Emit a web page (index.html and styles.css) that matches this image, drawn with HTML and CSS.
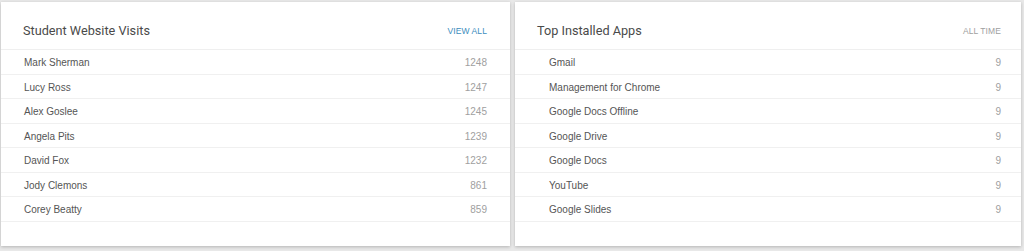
FILE: index.html
```html
<!DOCTYPE html>
<html>
<head>
<meta charset="utf-8">
<link rel="stylesheet" href="styles.css">
</head>
<body>
<div class="board">
  <section class="card">
    <header class="card-head">
      <h2 class="card-title">Student Website Visits</h2>
      <a class="card-link">VIEW ALL</a>
    </header>
    <ul class="list">
      <li class="row"><span class="name">Mark Sherman</span><span class="val">1248</span></li>
      <li class="row"><span class="name">Lucy Ross</span><span class="val">1247</span></li>
      <li class="row"><span class="name">Alex Goslee</span><span class="val">1245</span></li>
      <li class="row"><span class="name">Angela Pits</span><span class="val">1239</span></li>
      <li class="row"><span class="name">David Fox</span><span class="val">1232</span></li>
      <li class="row"><span class="name">Jody Clemons</span><span class="val">861</span></li>
      <li class="row"><span class="name">Corey Beatty</span><span class="val">859</span></li>
    </ul>
  </section>
  <section class="card card-apps">
    <header class="card-head">
      <h2 class="card-title">Top Installed Apps</h2>
      <span class="card-meta">ALL TIME</span>
    </header>
    <ul class="list">
      <li class="row"><span class="name">Gmail</span><span class="val">9</span></li>
      <li class="row"><span class="name">Management for Chrome</span><span class="val">9</span></li>
      <li class="row"><span class="name">Google Docs Offline</span><span class="val">9</span></li>
      <li class="row"><span class="name">Google Drive</span><span class="val">9</span></li>
      <li class="row"><span class="name">Google Docs</span><span class="val">9</span></li>
      <li class="row"><span class="name">YouTube</span><span class="val">9</span></li>
      <li class="row"><span class="name">Google Slides</span><span class="val">9</span></li>
    </ul>
  </section>
</div>
</body>
</html>
```
FILE: styles.css
```css
html, body {
  margin: 0;
  padding: 0;
  background: #e8e8e8;
  height: 251px;
  overflow: hidden;
}
.board {
  display: grid;
  grid-template-columns: 509px 506px;
  column-gap: 5px;
  padding: 2px 0 0 1px;
}
.card {
  background: #fff;
  height: 244px;
  box-shadow: 0 1px 3px rgba(0,0,0,0.22);
  display: flex;
  flex-direction: column;
}
.card-head {
  height: 48px;
  box-sizing: border-box;
  display: flex;
  align-items: center;
  justify-content: space-between;
  padding: 9px 23px 0 22px;
  border-bottom: 1px solid #efefef;
}
.card-title {
  margin: 0;
  font-family: Roboto, "Liberation Sans", sans-serif;
  font-weight: 400;
  font-size: 12.7px;
  color: #4a4a4a;
}
.card-link, .card-meta {
  font-family: "Liberation Sans", Arial, sans-serif;
  font-size: 8.5px;
  letter-spacing: 0.1px;
  padding-top: 1px;
}
.card-link { color: #3b8dbd; }
.card-meta { color: #a0a0a0; }
.list {
  list-style: none;
  margin: 0;
  padding: 0;
}
.row {
  height: 24.5px;
  box-sizing: border-box;
  display: flex;
  align-items: center;
  justify-content: space-between;
  padding: 2px 23px 0;
  border-bottom: 1px solid #f0f0f0;
  font-family: "Liberation Sans", Arial, sans-serif;
  font-size: 10px;
}
.name { color: #555; }
.val { color: #a0a0a0; }
.card-apps .card-head { padding-right: 20px; }
.card-apps .row { padding: 2px 20px 0 34px; }
```
